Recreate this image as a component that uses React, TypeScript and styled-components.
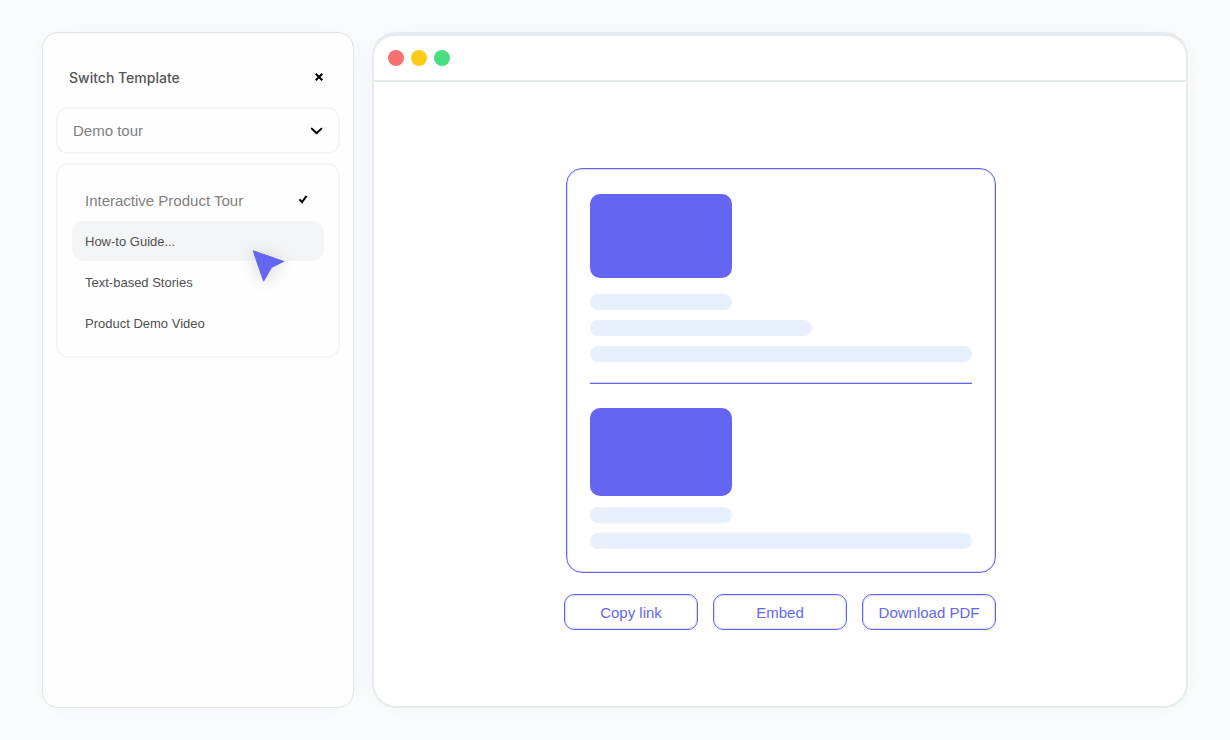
import React, { useState } from "react";
import styled, { createGlobalStyle } from "styled-components";

const GlobalStyle = createGlobalStyle`
  *, *::before, *::after { box-sizing: border-box; }
  body {
    margin: 0;
    background: #fbfcfe;
    font-family: "Liberation Sans", Arial, sans-serif;
  }
  button, select { font: inherit; color: inherit; }
`;

const Page = styled.main`
  display: flex;
  gap: 18px;
  min-height: 100vh;
  padding: 32px 42px;
`;

const SidePanel = styled.aside`
  flex: 0 0 312px;
  padding: 33px 13px;
  background: #fefefe;
  border: 1px solid #dfe4e8;
  border-radius: 16px;
  box-shadow: 0 0 30px rgba(30, 50, 80, 0.04);
`;

const PanelHeader = styled.header`
  display: flex;
  align-items: flex-start;
  justify-content: space-between;
  height: 24px;
  margin-bottom: 17px;
  padding: 0 13px;
`;

const Title = styled.h2`
  margin: 0;
  font-family: Inter, "Liberation Sans", sans-serif;
  font-size: 14px;
  line-height: 24px;
  font-weight: 500;
  color: #555;
`;

const CloseButton = styled.button`
  display: flex;
  align-items: center;
  justify-content: center;
  width: 16px;
  height: 22px;
  padding: 0;
  border: 0;
  background: none;
  color: #000;
`;

const SelectBox = styled.div`
  display: grid;
  align-items: center;
  height: 47px;
  margin-bottom: 9px;
  border: 2px solid #f4f5f7;
  border-radius: 12px;

  > * { grid-area: 1 / 1; }
  > svg { justify-self: end; margin-right: 14px; pointer-events: none; }
`;

const Select = styled.select`
  width: 100%;
  height: 100%;
  padding: 0 40px 0 15px;
  appearance: none;
  border: 0;
  border-radius: 12px;
  background: transparent;
  font-size: 15px;
  color: #808080;
`;

const OptionList = styled.ul`
  display: flex;
  flex-direction: column;
  gap: 1px;
  margin: 0;
  padding: 15px 14px 13px;
  list-style: none;
  border: 2px solid #f4f5f7;
  border-radius: 12px;
`;

const OptionItem = styled.li`
  position: relative;
`;

const OptionButton = styled.button<{ $selected: boolean; $active: boolean }>`
  display: flex;
  align-items: center;
  justify-content: space-between;
  width: 100%;
  height: 40px;
  padding: 0 16px 0 13px;
  border: 0;
  border-radius: 12px;
  background: ${(p) => (p.$active ? "#f4f5f7" : "transparent")};
  font-size: ${(p) => (p.$selected ? "15px" : "13px")};
  color: ${(p) => (p.$selected ? "#808080" : "#505050")};
  text-align: left;
`;

const Cursor = styled.svg`
  position: absolute;
  top: 28px;
  right: 38px;
  overflow: visible;
  pointer-events: none;
  filter: drop-shadow(0 2px 8px rgba(0, 0, 0, 0.18));
`;

const BrowserWindow = styled.section`
  flex: 1;
  min-width: 0;
  background: #fff;
  border: 2px solid #e5ecee;
  border-top-width: 4px;
  border-radius: 24px;
  box-shadow: 0 0 30px rgba(30, 50, 80, 0.04);
`;

const TitleBar = styled.header`
  display: flex;
  align-items: center;
  gap: 7px;
  height: 46px;
  padding: 0 14px;
  border-bottom: 2px solid #e5ecee;
`;

const Dot = styled.span<{ $color: string }>`
  width: 16px;
  height: 16px;
  border-radius: 50%;
  background: ${(p) => p.$color};
`;

const Stage = styled.div`
  display: flex;
  justify-content: center;
  padding: 86px 24px 24px;
`;

const Preview = styled.div`
  display: flex;
  flex-direction: column;
  align-items: flex-end;
  gap: 21px;
  width: 100%;
  max-width: 432px;
`;

const Card = styled.article`
  width: 100%;
  max-width: 430px;
  padding: 25px 23px 23px;
  border: 1px solid #6366f1;
  border-radius: 16px;
  box-shadow: inset 0 0 0 1px rgba(99, 102, 241, 0.25);
`;

const Picture = styled.div<{ $height: number }>`
  width: 142px;
  height: ${(p) => p.$height}px;
  border-radius: 10px;
  background: #6466f1;
`;

const Lines = styled.div<{ $top: number }>`
  display: flex;
  flex-direction: column;
  gap: 10px;
  margin-top: ${(p) => p.$top}px;
`;

const Line = styled.div<{ $width: string }>`
  width: ${(p) => p.$width};
  max-width: 100%;
  height: 16px;
  border-radius: 8px;
  background: #e8f0fe;
`;

const Divider = styled.hr`
  height: 2px;
  margin: 20px 0 24px;
  border: 0;
  border-top: 1px solid #d0d1fb;
  background: #6366f1;
`;

const Actions = styled.div`
  display: grid;
  grid-template-columns: repeat(3, 1fr);
  gap: 15px;
  width: 100%;
`;

const ActionButton = styled.button`
  height: 36px;
  padding: 0;
  border: 1px solid #6366f1;
  border-radius: 10px;
  background: #fff;
  box-shadow: inset 0 0 0 1px rgba(99, 102, 241, 0.25);
  font-size: 15px;
  color: #6366f1;
  white-space: nowrap;
`;

const options = [
  "Interactive Product Tour",
  "How-to Guide...",
  "Text-based Stories",
  "Product Demo Video",
];

export default function App() {
  const [selected, setSelected] = useState(0);
  return (
    <>
      <GlobalStyle />
      <Page>
        <SidePanel>
          <PanelHeader>
            <Title>Switch Template</Title>
            <CloseButton aria-label="Close">
              <svg width="8" height="8" viewBox="0 0 8 8" fill="none" stroke="currentColor" strokeWidth="2">
                <path d="M0.7 0.7 7.3 7.3M7.3 0.7 0.7 7.3" />
              </svg>
            </CloseButton>
          </PanelHeader>
          <SelectBox>
            <Select aria-label="Template type" defaultValue="demo">
              <option value="demo">Demo tour</option>
            </Select>
            <svg width="14" height="8" viewBox="0 0 14 8" fill="none" stroke="#000" strokeWidth="2" strokeLinecap="round" strokeLinejoin="round">
              <path d="M1.8 1.6 6.6 6.2 11.4 1.6" />
            </svg>
          </SelectBox>
          <OptionList>
            {options.map((name, i) => (
              <OptionItem key={name}>
                <OptionButton
                  $selected={i === selected}
                  $active={i === 1}
                  aria-pressed={i === selected}
                  onClick={() => setSelected(i)}
                >
                  {name}
                  {i === selected && (
                    <svg width="10" height="10" viewBox="0 0 10 10" fill="none" stroke="#000" strokeWidth="2" aria-hidden="true">
                      <path d="M1.5 4.4 4 7.2 8.6 0.9" />
                    </svg>
                  )}
                </OptionButton>
                {i === 1 && (
                  <Cursor width="34" height="34" viewBox="0 0 34 34" fill="#6366f1" stroke="#6366f1" strokeWidth="1" strokeLinejoin="round" aria-hidden="true">
                    <path d="M1.2 1.8 31.8 12.4 20.8 17.8Q19.6 18.4 18.9 19.6L11.6 32.2Z" />
                  </Cursor>
                )}
              </OptionItem>
            ))}
          </OptionList>
        </SidePanel>
        <BrowserWindow>
          <TitleBar>
            <Dot $color="#f87171" />
            <Dot $color="#facc15" />
            <Dot $color="#4ade80" />
          </TitleBar>
          <Stage>
            <Preview>
              <Card>
                <Picture $height={84} />
                <Lines $top={16}>
                  <Line $width="142px" />
                  <Line $width="222px" />
                  <Line $width="100%" />
                </Lines>
                <Divider />
                <Picture $height={88} />
                <Lines $top={11}>
                  <Line $width="142px" />
                  <Line $width="100%" />
                </Lines>
              </Card>
              <Actions>
                <ActionButton>Copy link</ActionButton>
                <ActionButton>Embed</ActionButton>
                <ActionButton>Download PDF</ActionButton>
              </Actions>
            </Preview>
          </Stage>
        </BrowserWindow>
      </Page>
    </>
  );
}
